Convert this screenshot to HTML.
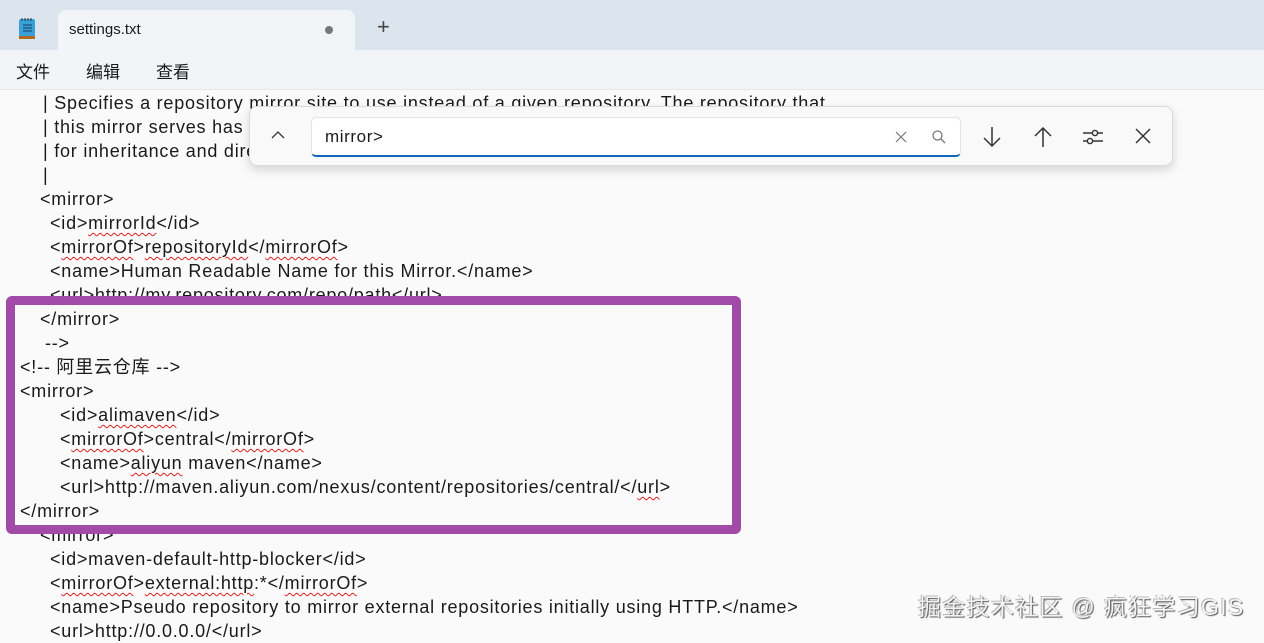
<!DOCTYPE html>
<html><head><meta charset="utf-8"><style>
*{margin:0;padding:0;box-sizing:border-box}
body{width:1264px;height:637px;overflow:hidden;background:#fafafa;font-family:"Liberation Sans","Noto Sans CJK SC",sans-serif;position:relative}
.top{position:absolute;left:0;top:0;width:1264px;height:50px;background:#dce5ee}
.tab{position:absolute;left:58px;top:10px;width:297px;height:42px;background:#f2f5f8;border-radius:8px 8px 0 0}
.tab span{position:absolute;left:11px;top:11px;font-size:15px;color:#1a1a1a}
.dot{position:absolute;left:267px;top:16px;width:8px;height:8px;border-radius:50%;background:#777}
.plus{position:absolute;left:377px;top:16px;font-size:22px;color:#444;line-height:22px}
.menu{position:absolute;left:0;top:50px;width:1264px;height:40px;background:#f2f5f8;border-bottom:1px solid #e3e6ea}
.menu span{position:absolute;top:8px;font-size:17px;color:#1a1a1a}
.ed{position:absolute;left:0;top:91px;width:1264px}
.l{position:absolute;white-space:pre;font-size:18px;color:#1a1a1a;line-height:24px;height:24px;letter-spacing:0.78px}
.s{text-decoration:underline wavy #d22;text-decoration-thickness:1px;text-underline-offset:3px}
.box{position:absolute;left:6px;top:296px;width:735px;height:238px;border:9px solid #a14aa8;border-radius:6px}
.find{position:absolute;left:249px;top:106px;width:924px;height:60px;background:#f9f9f9;border:1px solid #dadada;border-radius:8px;box-shadow:0 4px 10px rgba(0,0,0,.15)}
.inp{position:absolute;left:61px;top:10px;width:650px;height:40px;background:#fff;border-radius:5px;border:1px solid #e2e2e2;border-bottom:2px solid #1066b8}
.inp span{position:absolute;left:13px;top:9px;font-size:17px;color:#1a1a1a;letter-spacing:0.6px}
.wm{position:absolute;left:918px;top:588px;font-size:23px;color:#f4f4f4;text-shadow:1px 1px 1px #555,-1px -1px 0 #bbb;letter-spacing:1.3px;white-space:nowrap}
</style></head><body>
<div class="top">
<svg style="position:absolute;left:18px;top:17px" width="20" height="24" viewBox="0 0 20 24"><rect x="1" y="2" width="16" height="18" rx="2" fill="#3aa0d8"/><rect x="1" y="19" width="16" height="3" fill="#b06a20"/><path d="M5 8h9M5 11h9M5 14h9" stroke="#1d4f7a" stroke-width="1.3"/><path d="M4 1v3M7 1v3M10 1v3M13 1v3" stroke="#333" stroke-width="1"/></svg>
<div class="tab"><span>settings.txt</span><div class="dot"></div></div>
<div class="plus">+</div>
</div>
<div class="menu"><span style="left:16px">文件</span><span style="left:86px">编辑</span><span style="left:156px">查看</span></div>
<div class="ed">
<div class="l" style="left:43px;top:0">| Specifies a repository mirror site to use instead of a given repository. The repository that</div>
<div class="l" style="left:43px;top:24px">| this mirror serves has an ID that matches the mirrorOf element of this mirror. IDs are used</div>
<div class="l" style="left:43px;top:48px">| for inheritance and direct lookup purposes, and must be unique across the set of mirrors.</div>
<div class="l" style="left:43px;top:72px">|</div>
<div class="l" style="left:40px;top:96px">&lt;mirror&gt;</div>
<div class="l" style="left:50px;top:120px">&lt;id&gt;<span class="s">mirrorId</span>&lt;/id&gt;</div>
<div class="l" style="left:50px;top:144px">&lt;<span class="s">mirrorOf</span>&gt;<span class="s">repositoryId</span>&lt;/<span class="s">mirrorOf</span>&gt;</div>
<div class="l" style="left:50px;top:168px">&lt;name&gt;Human Readable Name for this Mirror.&lt;/name&gt;</div>
<div class="l" style="left:50px;top:192px">&lt;url&gt;http://my.repository.com/repo/path&lt;/url&gt;</div>
<div class="l" style="left:40px;top:216px">&lt;/mirror&gt;</div>
<div class="l" style="left:45px;top:240px">--&gt;</div>
<div class="l" style="left:20px;top:264px">&lt;!-- 阿里云仓库 --&gt;</div>
<div class="l" style="left:20px;top:288px">&lt;mirror&gt;</div>
<div class="l" style="left:60px;top:312px">&lt;id&gt;<span class="s">alimaven</span>&lt;/id&gt;</div>
<div class="l" style="left:60px;top:336px">&lt;<span class="s">mirrorOf</span>&gt;central&lt;/<span class="s">mirrorOf</span>&gt;</div>
<div class="l" style="left:60px;top:360px">&lt;name&gt;<span class="s">aliyun</span> maven&lt;/name&gt;</div>
<div class="l" style="left:60px;top:384px">&lt;url&gt;http://maven.aliyun.com/nexus/content/repositories/central/&lt;/<span class="s">url</span>&gt;</div>
<div class="l" style="left:20px;top:408px">&lt;/mirror&gt;</div>
<div class="l" style="left:40px;top:432px">&lt;mirror&gt;</div>
<div class="l" style="left:50px;top:456px">&lt;id&gt;maven-default-http-blocker&lt;/id&gt;</div>
<div class="l" style="left:50px;top:480px">&lt;<span class="s">mirrorOf</span>&gt;<span class="s">external:http</span>:*&lt;/<span class="s">mirrorOf</span>&gt;</div>
<div class="l" style="left:50px;top:504px">&lt;name&gt;Pseudo repository to mirror external repositories initially using HTTP.&lt;/name&gt;</div>
<div class="l" style="left:50px;top:528px">&lt;url&gt;http://0.0.0.0/&lt;/url&gt;</div>
</div>
<div class="box"></div>
<div class="find">
<svg style="position:absolute;left:21px;top:23px" width="14" height="10"><path d="M1 8L7 2L13 8" stroke="#333" stroke-width="1.3" fill="none"/></svg>
<div class="inp"><span>mirror&gt;</span>
<svg style="position:absolute;left:583px;top:13px" width="12" height="12"><path d="M1 1L11 11M11 1L1 11" stroke="#777" stroke-width="1.2"/></svg>
<svg style="position:absolute;left:619px;top:11px" width="16" height="16"><circle cx="6.5" cy="6.5" r="4.5" stroke="#777" stroke-width="1.3" fill="none"/><path d="M10 10L14 14" stroke="#777" stroke-width="1.3"/></svg>
</div>
<svg style="position:absolute;left:731px;top:18px" width="22" height="24"><path d="M11 2V21M3 13L11 21L19 13" stroke="#333" stroke-width="1.5" fill="none"/></svg>
<svg style="position:absolute;left:782px;top:18px" width="22" height="24"><path d="M11 22V3M3 11L11 3L19 11" stroke="#333" stroke-width="1.5" fill="none"/></svg>
<svg style="position:absolute;left:832px;top:19px" width="22" height="22"><path d="M1 7H21M1 15H21" stroke="#333" stroke-width="1.4"/><circle cx="13" cy="7" r="2.6" fill="#f9f9f9" stroke="#333" stroke-width="1.4"/><circle cx="8" cy="15" r="2.6" fill="#f9f9f9" stroke="#333" stroke-width="1.4"/></svg>
<svg style="position:absolute;left:884px;top:20px" width="18" height="18"><path d="M2 2L16 16M16 2L2 16" stroke="#333" stroke-width="1.5"/></svg>
</div>
<div class="wm">掘金技术社区 @ 疯狂学习GIS</div>
</body></html>
